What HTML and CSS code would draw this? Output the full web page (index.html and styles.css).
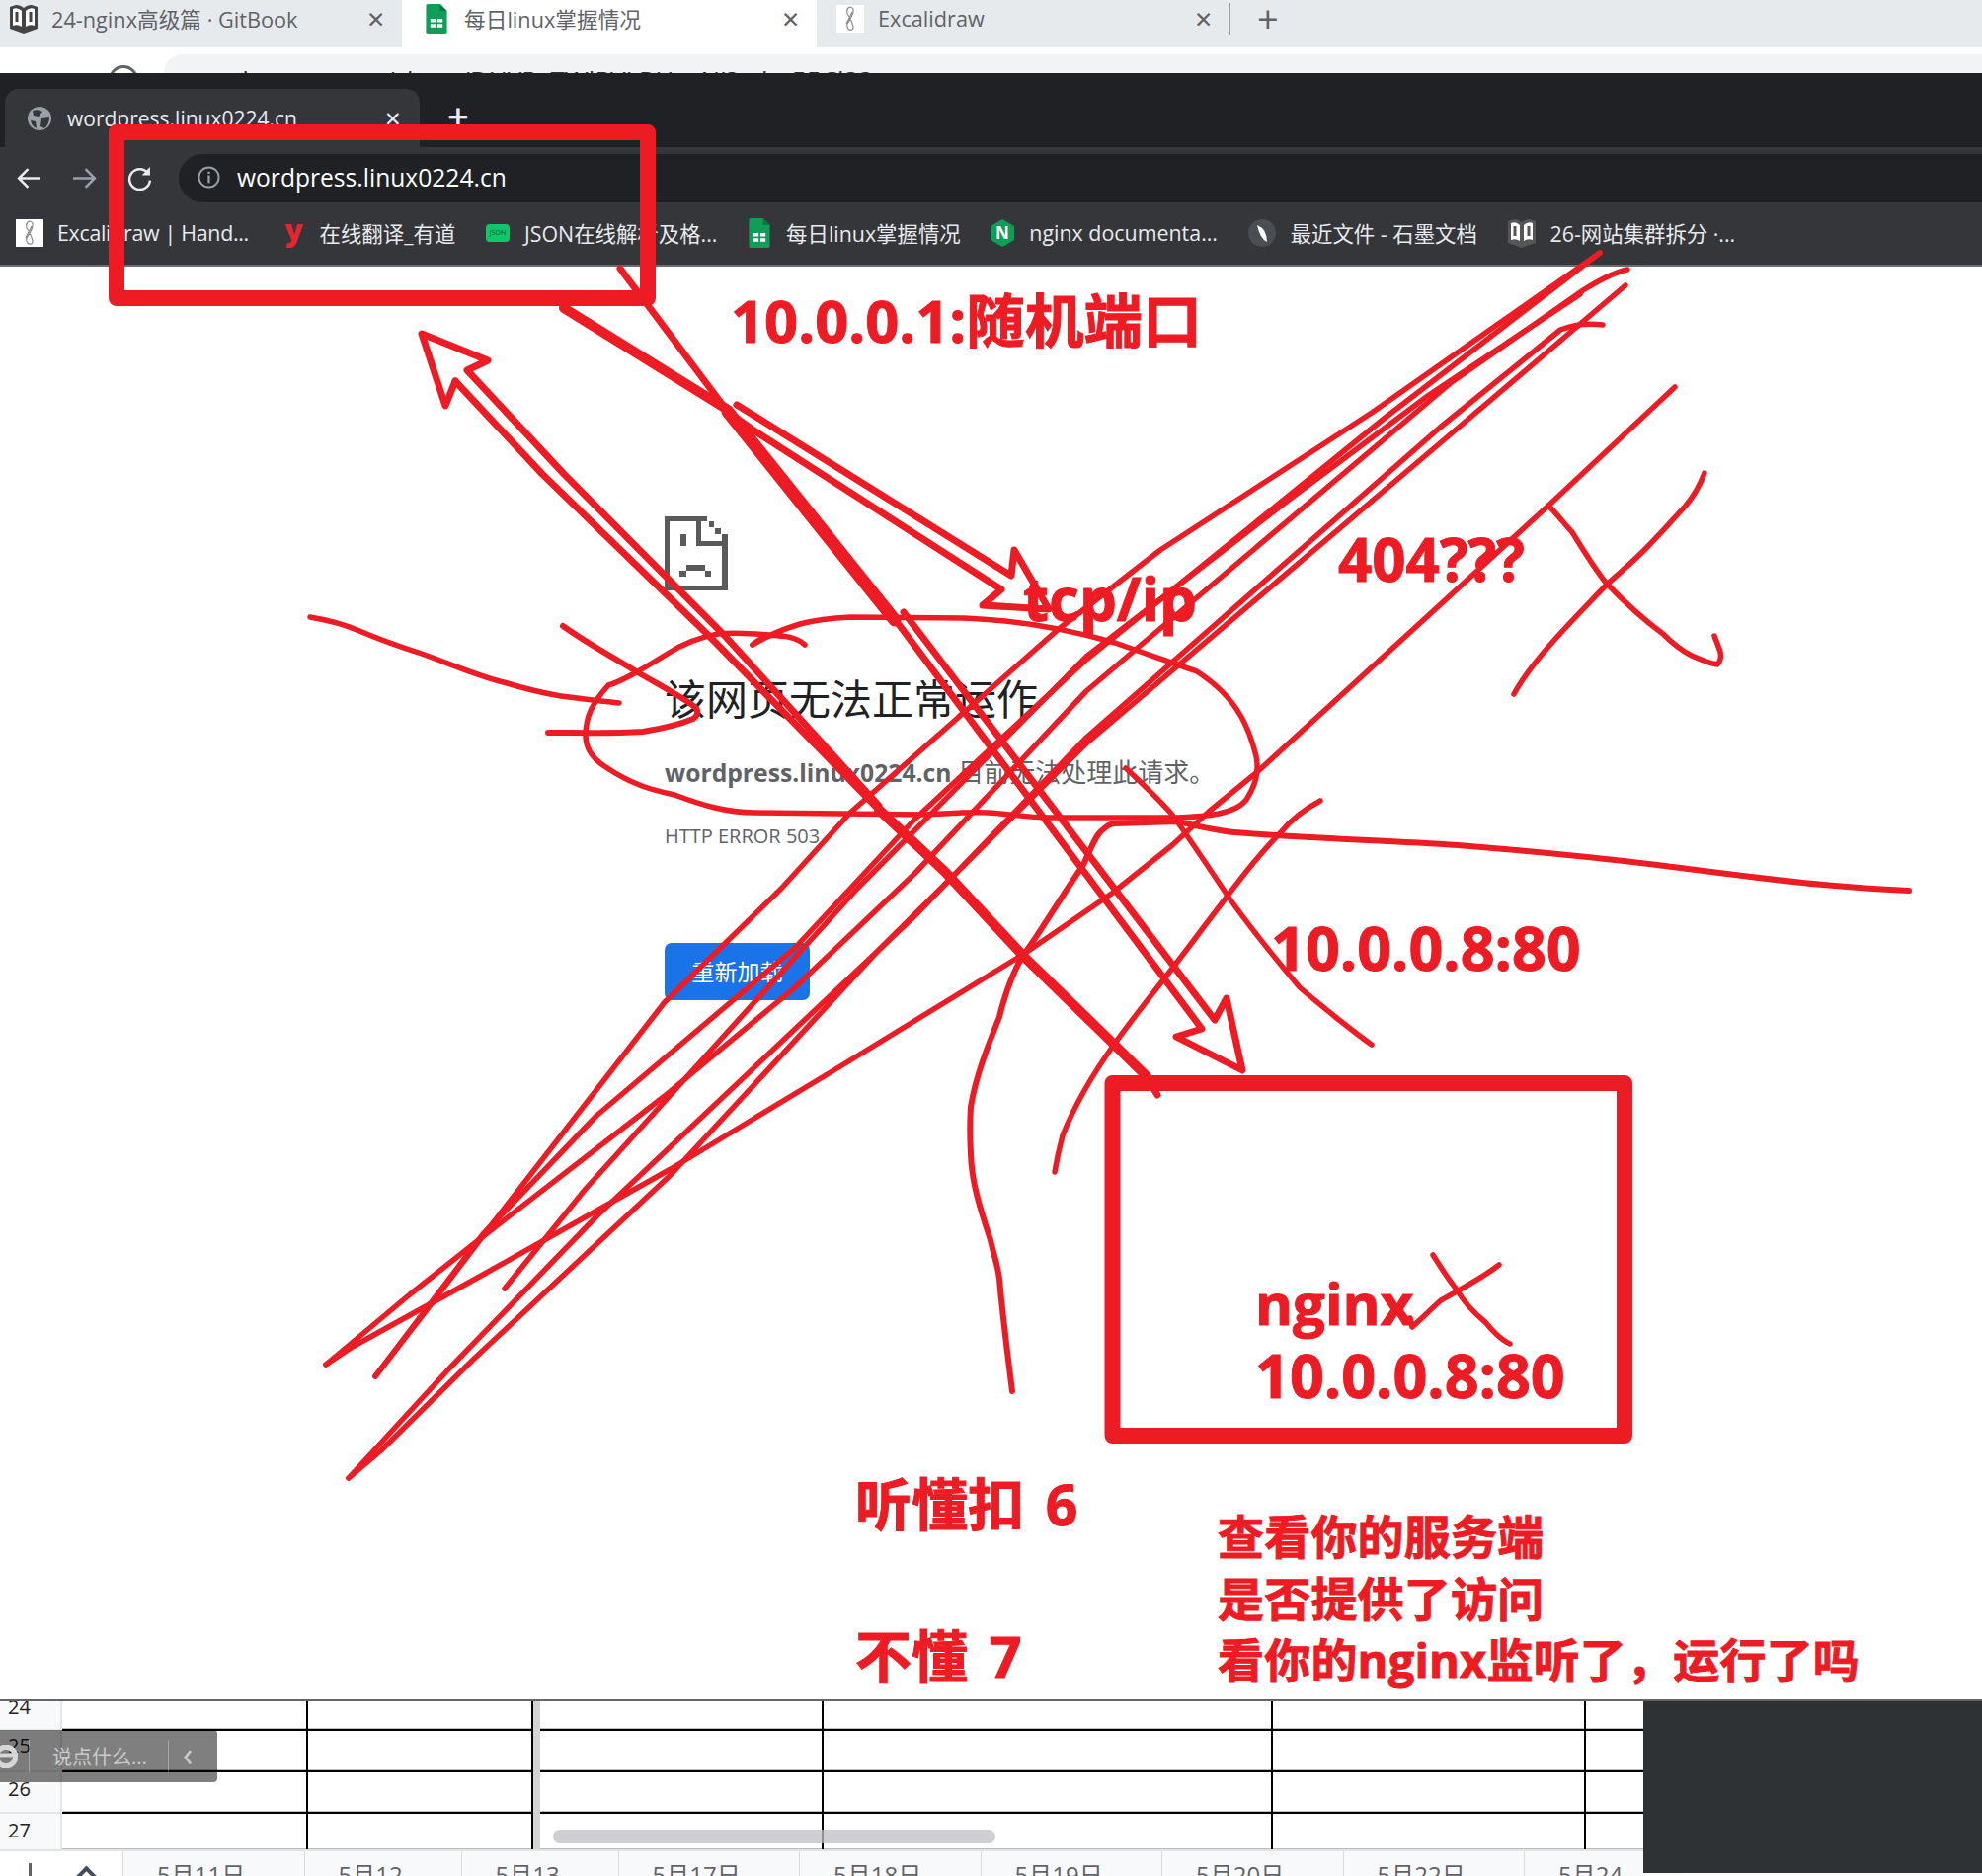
FILE: index.html

```html
<!DOCTYPE html>
<html lang="zh-CN">
<head>
  <meta charset="UTF-8">
  <title>wordpress.linux0224.cn</title>
  <link rel="stylesheet" href="styles.css">
</head>
<body>
  <svg class="defs" width="0" height="0">
    <symbol id="ic-book" viewBox="0 0 28 30">
      <path d="M0 3 L6 1 Q11 1 14 4 Q17 1 22 1 L28 3 V25 L14 30 L0 25 Z" fill="currentColor"/>
      <path d="M3 5 Q8 3 12 7 V23 Q8 20 3 22 Z M16 7 Q20 3 25 5 V22 Q20 20 16 23 Z" fill="#fff"/>
      <path d="M7 8 V18 M21 18 V8" stroke="currentColor" stroke-width="3" fill="none"/>
    </symbol>
    <symbol id="ic-sheets" viewBox="0 0 24 34">
      <path d="M2 0 H16 L24 8 V32 Q24 34 22 34 H2 Q0 34 0 32 V2 Q0 0 2 0 Z" fill="#0f9d58"/>
      <path d="M16 0 L24 8 H16 Z" fill="#0a7a44"/>
      <path d="M5 17 H11 V21 H5 Z M13 17 H19 V21 H13 Z M5 23 H11 V27 H5 Z M13 23 H19 V27 H13 Z" fill="#fff"/>
    </symbol>
    <symbol id="ic-excali" viewBox="0 0 28 28">
      <rect width="28" height="28" fill="#fff"/>
      <path d="M12 3 Q15 1 17 4 Q18 9 11 19 Q10 23 13 25 Q17 26 17 22 Q15 14 11 9 Q10 5 12 3 Z M16 7 L10 19" stroke="#8b8b8b" stroke-width="1.2" fill="none"/>
    </symbol>
  </svg>

  <div class="outer-tabs">
    <div class="otab otab-left">
      <svg class="fav-book dark"><use href="#ic-book"/></svg>
      <span class="otab-title">24-nginx高级篇 · GitBook</span>
      <span class="otab-close">✕</span>
    </div>
    <div class="otab otab-active">
      <svg class="fav-sheets"><use href="#ic-sheets"/></svg>
      <span class="otab-title">每日linux掌握情况</span>
      <span class="otab-close">✕</span>
    </div>
    <div class="otab otab-right">
      <svg class="fav-square"><use href="#ic-excali"/></svg>
      <span class="otab-title">Excalidraw</span>
      <span class="otab-close">✕</span>
    </div>
    <span class="otab-sep"></span>
    <span class="otab-plus">+</span>
  </div>

  <div class="outer-addr">
    <div class="outer-nav">
      <span class="peek-arrow">‹</span><span class="peek-arrow">›</span><span class="peek-ring"></span>
    </div>
    <div class="outer-omni">docs.qq.com/sheet/DUYPxTWlPVLRHxxNJ?tab=55Cl33</div>
  </div>

  <div class="win-tabs">
    <div class="win-tab">
      <svg class="globe" viewBox="0 0 24 24">
        <circle cx="12" cy="12" r="12" fill="#9aa0a6"/>
        <path d="M5 4 Q11 2 15 5 L11 10 L6 9 Z M14 12 L22 11 Q22 18 17 22 L13 20 Z M3 14 L8 15 L9 22 Q4 20 3 14 Z" fill="#35363a"/>
      </svg>
      <span class="win-tab-title">wordpress.linux0224.cn</span>
      <span class="win-tab-close">✕</span>
    </div>
    <span class="win-tab-plus">+</span>
  </div>

  <div class="toolbar">
    <svg class="nav-icon" viewBox="0 0 24 24"><path d="M23 12 H2 M11 3 L2 12 L11 21" stroke="#e8eaed" stroke-width="2.4" fill="none"/></svg>
    <svg class="nav-icon dim" viewBox="0 0 24 24"><path d="M1 12 H22 M13 3 L22 12 L13 21" stroke="#9aa0a6" stroke-width="2.4" fill="none"/></svg>
    <svg class="nav-icon" viewBox="0 0 24 24"><path d="M20 7 A10 10 0 1 0 22 14" stroke="#e8eaed" stroke-width="2.4" fill="none"/><path d="M22 1 V9 H14 Z" fill="#e8eaed"/></svg>
    <div class="omnibox">
      <svg class="info-icon" viewBox="0 0 24 24">
        <circle cx="12" cy="12" r="10.5" stroke="#9aa0a6" stroke-width="2" fill="none"/>
        <path d="M12 10 V18 M12 6 V8.4" stroke="#9aa0a6" stroke-width="2.4"/>
      </svg>
      <span class="omni-text">wordpress.linux0224.cn</span>
    </div>
  </div>

  <div class="bookmarks">
    <div class="bm bm-first"><svg class="fav-square"><use href="#ic-excali"/></svg><span>Excalidraw | Hand...</span></div>
    <div class="bm"><span class="youdao">y</span><span>在线翻译_有道</span></div>
    <div class="bm"><span class="json-icon">JSON</span><span>JSON在线解析及格...</span></div>
    <div class="bm"><svg class="fav-sheets"><use href="#ic-sheets"/></svg><span>每日linux掌握情况</span></div>
    <div class="bm">
      <svg class="fav-nginx" viewBox="0 0 24 28">
        <path d="M12 0 L24 7 V21 L12 28 L0 21 V7 Z" fill="#0f9d58"/>
        <text x="12" y="20" class="fav-nginx-n">N</text>
      </svg>
      <span>nginx documenta...</span>
    </div>
    <div class="bm">
      <svg class="fav-shimo" viewBox="0 0 28 28">
        <circle cx="14" cy="14" r="14" fill="#4a4d52"/>
        <path d="M9 6 Q19 10 19 23 Q12 20 9 6 Z" fill="#fff"/>
      </svg>
      <span>最近文件 - 石墨文档</span>
    </div>
    <div class="bm"><svg class="fav-book light"><use href="#ic-book"/></svg><span>26-网站集群拆分 ·...</span></div>
  </div>

  <main class="page">
    <svg class="sad-file" viewBox="0 0 64 75" shape-rendering="crispEdges">
      <path d="M0 0 H43 V5 H37 V25 H64 V75 H0 Z M5 5 V70 H58 V30 H32 V5 Z" fill="#5a5a5a"/>
      <path d="M45 5 H50 V11 H45 Z M51 12 H57 V18 H51 Z M58 18 H64 V25 H58 Z M16 18 H22 V30 H16 Z M22 49 H41 V55 H22 Z M15 55 H22 V61 H15 Z M41 55 H47 V61 H41 Z" fill="#5a5a5a"/>
    </svg>
    <h1 class="err-title">该网页无法正常运作</h1>
    <p class="err-desc"><strong>wordpress.linux0224.cn</strong> 目前无法处理此请求。</p>
    <p class="err-code">HTTP ERROR 503</p>
    <button class="reload-btn">重新加载</button>
  </main>

  <section class="sheet">
    <table class="grid">
      <colgroup>
        <col class="c-head"><col class="c-a"><col class="c-b"><col class="c-freeze"><col class="c-c"><col class="c-d"><col class="c-e"><col class="c-f">
      </colgroup>
      <tr class="r-24"><th>24</th><td></td><td></td><td class="freeze"></td><td></td><td></td><td></td><td></td></tr>
      <tr class="r-25"><th>25</th><td></td><td></td><td class="freeze"></td><td></td><td></td><td></td><td></td></tr>
      <tr class="r-26"><th>26</th><td></td><td></td><td class="freeze"></td><td></td><td></td><td></td><td></td></tr>
      <tr class="r-27"><th>27</th><td></td><td></td><td class="freeze"></td><td></td><td></td><td></td><td></td></tr>
    </table>
    <div class="sheet-tabs">
      <div class="sheet-tools">
        <span class="tool-plus"></span>
        <span class="tool-up"></span>
      </div>
      <div class="stab stab-wide">5月11日<i>▾</i></div>
      <div class="stab">5月12<i>▾</i></div>
      <div class="stab">5月13<i>▾</i></div>
      <div class="stab stab-wide">5月17日<i>▾</i></div>
      <div class="stab stab-wide">5月18日<i>▾</i></div>
      <div class="stab stab-wide">5月19日<i>▾</i></div>
      <div class="stab stab-wide">5月20日<i>▾</i></div>
      <div class="stab stab-wide">5月22日<i>▾</i></div>
      <div class="stab">5月24<i>▾</i></div>
    </div>
    <div class="h-scroll"></div>
    <div class="comment-pill">
      <svg class="pill-logo" viewBox="0 0 24 32">
        <circle cx="8" cy="16" r="13" fill="none" stroke="#d6d6d6" stroke-width="7"/>
        <path d="M-4 14 H20" stroke="#d6d6d6" stroke-width="5"/>
      </svg>
      <span class="pill-sep"></span>
      <span class="pill-text">说点什么...</span>
      <span class="pill-sep"></span>
      <span class="pill-chevron">‹</span>
    </div>
    <div class="dark-panel"></div>
  </section>

  <!-- hand drawn marks on top of the screenshot -->
  <svg class="ink" viewBox="0 0 2007 1900">
    <rect class="ink-box" x="118" y="134" width="538" height="168"/>
    <rect class="ink-box" x="1126.5" y="1097" width="518.5" height="357"/>

    <!-- arrow to the browser -->
    <path class="arrow" d="M461 386 L451 411 L427 338 L494 365 L473 375 L571 480 L734 644 L890 816"/>
    <path class="arrow" d="M461 386 L549 480 L718 644 L890 820"/>
    <path class="thick" d="M890 820 L957 883 L1037 969 L1110 1040 L1161 1090"/>
    <path class="arrow" d="M1161 1090 L1172 1109"/>

    <!-- arrow to tcp/ip -->
    <path class="thick" d="M571 312 L737 415"/>
    <path class="arrow" d="M746 410 L1024 583 L1027 557 L1062 617 L995 613 L1014 597 L765 437 L737 417"/>

    <!-- arrow to the server box -->
    <path class="arrow" d="M628 272 L737 417"/>
    <path class="thicker" d="M737 417 L906 628"/>
    <path class="arrow" d="M903 623 L1217 1042 L1191 1050 L1258 1084 L1242 1011 L1230 1033 L915 620"/>

    <!-- bundle going up right -->
    <path d="M1620 256 L1389 418 L1175 557 L1072 637 L861 823 L791 900 L673 1015 L495 1244 L438 1319 L380 1394"/>
    <path d="M380 1394 L489 1250 L604 1130 L805 960 L926 830 L1100 668 L1400 425 L1620 256"/>
    <path d="M1648 273 Q1632 276 1603 294 L1470 387 L1100 700 L926 885 L805 1000 L673 1110 L492 1250 L415 1311 L330 1382"/>
    <path d="M330 1382 L357 1364 L489 1291 L679 1184 L851 1080 L1037 966 L1127 904 L1187 856 L1224 822 L1273 782 L1568 512 L1696 392"/>
    <path d="M511 1305 L593 1204 L868 900 L1100 665 L1300 510 L1447 400 L1600 298"/>
    <path d="M353 1497 L455 1386 L604 1232 L926 928 L1100 747 L1458 433 L1580 334 Q1600 326 1623 329"/>
    <path d="M353 1497 L386 1469 L478 1378 L679 1190 L891 961 L1100 753 L1458 449 L1646 289"/>

    <!-- circle round the error text -->
    <path d="M762 653 C772 644 782 642 791 644 C802 645 810 648 815 653"/>
    <path d="M791 644 C770 642 745 640 727 642 C705 646 690 653 676 662 C650 678 630 690 616 694 C600 712 593 725 593 745 C593 758 600 768 612 776 C640 795 660 800 683 805 C710 815 735 823 765 823 L938 825 C960 824 980 822 1001 823 C1020 824 1040 828 1065 828 L1193 828 C1220 827 1250 825 1262 810 C1272 795 1275 780 1272 766 C1268 750 1262 735 1257 726 C1245 705 1230 692 1212 680 C1190 672 1160 662 1129 651 C1080 637 1030 628 976 626 L861 625 C840 626 825 628 810 632 C790 638 775 645 762 653"/>
    <path d="M314 625 C332 628 348 632 364 639 C385 648 405 655 427 662 C455 672 482 684 510 691 C530 697 550 702 568 705 C590 708 610 710 627 712"/>
    <path class="mid" d="M570 634 C600 655 625 668 644 680 C670 695 690 705 705 717 C708 722 705 726 702 728 C685 735 670 738 651 741 C620 743 585 742 555 742"/>

    <!-- long curves -->
    <path class="mid" d="M1025 1409 C1020 1370 1015 1330 1012 1295 C1010 1280 1006 1270 1003 1256 C994 1228 984 1200 983 1169 C982 1150 982 1135 983 1121 C988 1090 1000 1060 1012 1030 C1018 1005 1026 985 1035 969 C1050 950 1070 915 1097 876 C1105 858 1110 845 1116 841 C1122 835 1126 834 1129 834 L1193 832 C1210 836 1230 841 1250 843 C1320 849 1400 851 1476 856 C1550 862 1620 869 1678 876 C1740 884 1800 892 1846 896 C1880 899 1910 901 1933 902"/>
    <path d="M1140 778 C1155 792 1172 808 1187 825 C1205 850 1225 880 1245 910 C1270 945 1295 975 1316 1000 C1330 1012 1340 1020 1351 1029 C1365 1040 1380 1052 1389 1058"/>
    <path d="M1337 811 C1320 820 1306 832 1297 843 C1270 870 1245 905 1218 940 C1185 985 1155 1020 1128 1058 C1105 1090 1088 1120 1076 1150 C1072 1165 1070 1175 1068 1187"/>

    <!-- the X on the right -->
    <path d="M1726 479 C1720 495 1713 505 1707 512 C1695 525 1682 540 1670 552 C1655 568 1640 580 1626 593 C1605 615 1585 635 1568 655 C1555 670 1540 690 1533 703"/>
    <path d="M1568 512 C1578 522 1585 532 1592 539 C1602 555 1612 572 1626 590 C1645 610 1665 628 1684 642 C1695 653 1705 660 1713 664 C1722 668 1732 672 1739 673 C1742 670 1743 665 1742 660 L1736 644"/>

    <!-- the X next to nginx -->
    <path d="M1451 1271 C1458 1282 1466 1295 1475 1306 C1483 1320 1493 1330 1504 1339 C1513 1350 1522 1358 1529 1361"/>
    <path d="M1518 1281 C1500 1295 1480 1305 1459 1317 C1450 1325 1440 1335 1430 1344 L1428 1335"/>
  </svg>

  <div class="note note-port">10.0.0.1:随机端口</div>
  <div class="note note-tcp">tcp/ip</div>
  <div class="note note-404">404???</div>
  <div class="note note-target">10.0.0.8:80</div>
  <div class="note note-nginx"><span class="note-small">nginx</span><br>10.0.0.8:80</div>
  <div class="note note-six">听懂扣 6</div>
  <div class="note note-seven">不懂 7</div>
  <div class="note note-check">查看你的服务端<br>是否提供了访问<br>看你的nginx监听了，运行了吗</div>
</body>
</html>
```

FILE: styles.css

```css
html, body {
  margin: 0;
  padding: 0;
}

body {
  position: relative;
  width: 2007px;
  height: 1900px;
  overflow: hidden;
  background: #fff;
  font-family: "Open Sans", "Noto Sans CJK SC", sans-serif;
}

.defs {
  position: absolute;
}

/* outer browser, mostly hidden behind the dark one */
.outer-tabs {
  display: flex;
  align-items: center;
  height: 48px;
  background: #e7eaed;
  color: #5f6368;
  font-size: 21.7px;
}

.otab {
  display: flex;
  align-items: center;
  box-sizing: border-box;
  width: 420px;
  height: 48px;
  padding: 0 0 11px 10px;
  gap: 14px;
  background: #e7eaed;
}

.otab-left {
  width: 407px;
  border-radius: 0 0 14px 0;
}

.otab-active {
  background: #fff;
  padding-left: 23px;
  gap: 16px;
}

.otab-right {
  width: 418px;
  padding-left: 20px;
  border-radius: 0 0 0 14px;
}

.otab-title {
  flex: 1;
  white-space: nowrap;
}

.otab-close {
  width: 36px;
  font-size: 23px;
}

.otab-sep {
  width: 1px;
  height: 32px;
  margin-bottom: 10px;
  background: #9aa0a6;
}

.otab-plus {
  margin: 0 0 12px 27px;
  font-size: 38px;
  line-height: 38px;
}

.outer-addr {
  display: flex;
  height: 26px;
  overflow: hidden;
}

.outer-nav {
  display: flex;
  gap: 40px;
  width: 166px;
  padding: 18px 0 0 8px;
  box-sizing: border-box;
  color: #5f6368;
  font-size: 30px;
  line-height: 30px;
}

.peek-ring {
  width: 24px;
  height: 24px;
  margin-left: 4px;
  border: 3px solid #5f6368;
  border-radius: 50%;
}

.outer-omni {
  flex: 1;
  margin-top: 7px;
  padding: 13px 0 0 70px;
  border-radius: 24px 0 0 0;
  background: #f1f3f4;
  color: #333;
  font-size: 26px;
  line-height: 26px;
  white-space: nowrap;
}

/* dark window */
.win-tabs {
  display: flex;
  align-items: flex-start;
  height: 75px;
  background: #202124;
  color: #e8eaed;
  overflow: hidden;
}

.win-tab {
  display: flex;
  align-items: center;
  box-sizing: border-box;
  width: 420px;
  height: 75px;
  margin: 16px 0 0 5px;
  padding: 0 0 16px 23px;
  gap: 16px;
  background: #35363a;
  border-radius: 14px 14px 0 0;
  font-size: 21px;
}

.globe {
  width: 24px;
  height: 24px;
}

.win-tab-title {
  flex: 1;
  white-space: nowrap;
}

.win-tab-close {
  width: 36px;
  font-size: 21px;
}

.win-tab-plus {
  margin: 24px 0 0 28px;
  font-size: 38px;
  line-height: 38px;
  font-weight: 600;
}

.toolbar {
  display: flex;
  align-items: center;
  box-sizing: border-box;
  height: 56px;
  padding: 7px 0 0 17px;
  gap: 31px;
  background: #35363a;
}

.nav-icon {
  width: 25px;
  height: 25px;
}

.omnibox {
  display: flex;
  align-items: center;
  flex: 1;
  height: 49px;
  margin-left: -4px;
  padding: 0 0 2px 19px;
  box-sizing: border-box;
  gap: 17px;
  border-radius: 25px 0 0 25px;
  background: #202124;
  color: #fff;
  font-size: 24.6px;
}

.info-icon {
  width: 23px;
  height: 23px;
}

.bookmarks {
  display: flex;
  align-items: center;
  box-sizing: border-box;
  height: 65px;
  padding: 0 0 2px 16px;
  gap: 30.7px;
  background: #35363a;
  border-bottom: 2px solid #6b6c6f;
  color: #e8eaed;
  font-size: 21.4px;
  white-space: nowrap;
}

.bm {
  display: flex;
  align-items: center;
  gap: 15px;
}

.bm-first {
  margin-right: 9px;
  gap: 14px;
  letter-spacing: -0.3px;
}

.fav-square {
  width: 28px;
  height: 28px;
}

.fav-sheets {
  width: 24px;
  height: 30px;
}

.fav-book {
  width: 28px;
  height: 30px;
}

.fav-book.dark {
  color: #444;
}

.fav-book.light {
  color: #555;
}

.fav-nginx {
  width: 24px;
  height: 28px;
}

.fav-nginx-n {
  fill: #fff;
  font-size: 17px;
  font-weight: 700;
  text-anchor: middle;
}

.fav-shimo {
  width: 28px;
  height: 28px;
}

.youdao {
  width: 20px;
  margin: 0 0 6px -3px;
  color: #e3262e;
  font-size: 30px;
  line-height: 28px;
  font-weight: 800;
}

.json-icon {
  width: 24px;
  height: 18px;
  border-radius: 4px;
  background: #12c46a;
  color: #0a5c33;
  font-size: 7px;
  line-height: 18px;
  text-align: center;
}

/* error page */
.page {
  display: flex;
  flex-direction: column;
  align-items: flex-start;
  box-sizing: border-box;
  height: 1451px;
  padding: 253px 0 0 673px;
  background: #fff;
}

.sad-file {
  width: 64px;
  height: 75px;
}

.err-title {
  margin: 80px 0 0;
  color: #202124;
  font-size: 42px;
  line-height: 60px;
  font-weight: 400;
}

.err-desc {
  margin: 24px 0 0;
  color: #5f6368;
  font-size: 26px;
  line-height: 40px;
}

.err-desc strong {
  font-size: 24.7px;
}

.err-code {
  margin: 29px 0 0;
  color: #5f6368;
  font-size: 20px;
  line-height: 30px;
}

.reload-btn {
  width: 147px;
  height: 58px;
  margin-top: 93px;
  padding-bottom: 3px;
  border: 0;
  border-radius: 7px;
  background: #1a73e8;
  color: #fff;
  font-family: inherit;
  font-size: 23px;
}

/* spreadsheet strip at the bottom */
.sheet {
  position: relative;
  height: 179px;
  overflow: hidden;
  border-top: 2px solid #666;
  box-sizing: border-box;
}

.grid {
  width: 1710px;
  table-layout: fixed;
  border-collapse: collapse;
}

.c-head { width: 62px; }
.c-a { width: 249px; }
.c-b { width: 228px; }
.c-freeze { width: 8px; }
.c-c { width: 286px; }
.c-d { width: 455px; }
.c-e { width: 317px; }

.r-24 { height: 29px; }
.r-25 { height: 42px; }
.r-26 { height: 42px; }
.r-27 { height: 37px; }

.grid th {
  box-sizing: border-box;
  padding: 0 0 0 8px;
  background: #f8f9fa;
  border-right: 2px solid #e6e6e6;
  border-bottom: 2px solid #e6e6e6;
  color: #222;
  font-size: 20px;
  line-height: 0;
  font-weight: 400;
  text-align: left;
}

/* the numbers sit high in the scrolled rows */
.grid .r-24 th { padding-bottom: 16px; }
.grid .r-25 th { padding-bottom: 10px; }
.grid .r-26 th { padding-bottom: 6px; }
.grid .r-27 th { padding-bottom: 2px; }

.grid td {
  box-sizing: border-box;
  padding: 0;
  border-right: 2px solid #000;
  border-bottom: 2px solid #000;
  box-shadow: inset 0 -1px 0 #bbb;
}

.grid td.freeze {
  background: #d3d3d3;
  border-bottom: 0;
  border-right: 0;
  box-shadow: none;
}

.r-27 th,
.r-27 td {
  border-bottom: 0;
}

.sheet-tabs {
  display: flex;
  height: 26px;
  border-top: 2px solid #e3e3e3;
  color: #5f6368;
  font-size: 24px;
  line-height: 48px;
  overflow: hidden;
}

.sheet-tools {
  position: relative;
  flex: none;
  width: 124px;
  height: 26px;
  background: #fff;
}

.tool-plus {
  position: absolute;
  left: 29px;
  top: 12px;
  width: 3px;
  height: 14px;
  background: #5f6368;
}

.tool-up {
  position: absolute;
  left: 77px;
  top: 19px;
  width: 17px;
  height: 17px;
  border-top: 4px solid #444c56;
  border-left: 4px solid #444c56;
  transform: rotate(45deg);
}

.stab {
  flex: none;
  box-sizing: border-box;
  width: 159px;
  padding-left: 34px;
  background: #f8f9fa;
  border-left: 1px solid #dcdcdc;
  white-space: nowrap;
}

.stab-wide {
  width: 183.5px;
}

.stab i {
  margin-left: 12px;
  font-size: 14px;
  font-style: normal;
  color: #999;
}

.h-scroll {
  position: absolute;
  left: 560px;
  top: 130px;
  width: 448px;
  height: 14px;
  border-radius: 7px;
  background: rgba(190, 191, 196, 0.75);
}

.comment-pill {
  position: absolute;
  left: 0;
  top: 29px;
  display: flex;
  align-items: center;
  width: 220px;
  height: 53px;
  border-radius: 0 4px 4px 0;
  background: rgba(0, 0, 0, 0.5);
  color: rgba(255, 255, 255, 0.6);
  font-size: 20px;
}

.pill-logo {
  width: 18px;
  height: 24px;
  margin-right: 11px;
}

.pill-sep {
  width: 1px;
  height: 33px;
  background: rgba(255, 255, 255, 0.3);
}

.pill-text {
  box-sizing: border-box;
  width: 140px;
  padding-left: 23px;
  white-space: nowrap;
}

.pill-chevron {
  margin: 0 0 6px 14px;
  font-size: 34px;
  line-height: 34px;
}

.dark-panel {
  position: absolute;
  right: 0;
  top: -2px;
  width: 343px;
  height: 176px;
  background: #2f3235;
}

/* annotations drawn over everything */
.ink {
  position: absolute;
  left: 0;
  top: 0;
  width: 2007px;
  height: 1900px;
  pointer-events: none;
  fill: none;
  stroke: #ed1c24;
  stroke-width: 5.5;
  stroke-linecap: round;
  stroke-linejoin: round;
}

.ink-box {
  stroke-width: 16;
}

.ink .mid {
  stroke-width: 6;
}

.ink .arrow {
  stroke-width: 7;
}

.ink .thick {
  stroke-width: 10;
}

.ink .thicker {
  stroke-width: 13;
}

.note {
  position: absolute;
  color: #ed1c24;
  -webkit-text-stroke: 1px #ed1c24;
  font-family: "Open Sans", "Noto Sans CJK SC", sans-serif;
  font-weight: 700;
  font-size: 60px;
  line-height: 72px;
  white-space: nowrap;
}

.note-port { left: 740px; top: 288px; font-size: 59.6px; }
.note-tcp { left: 1036px; top: 570px; }
.note-404 { left: 1355px; top: 530px; }
.note-target { left: 1287px; top: 924px; font-size: 61px; }

.note-nginx {
  left: 1271px;
  top: 1282px;
  font-size: 61px;
  line-height: 73px;
}

.note-small {
  font-size: 58px;
}

.note-six {
  left: 866px;
  top: 1487px;
  font-size: 57px;
  word-spacing: 7px;
}

.note-seven {
  left: 866px;
  top: 1641px;
  font-size: 57px;
  word-spacing: 7px;
}

.note-check {
  left: 1233px;
  top: 1525px;
  font-size: 47px;
  line-height: 62.5px;
  letter-spacing: 0.2px;
}
```
